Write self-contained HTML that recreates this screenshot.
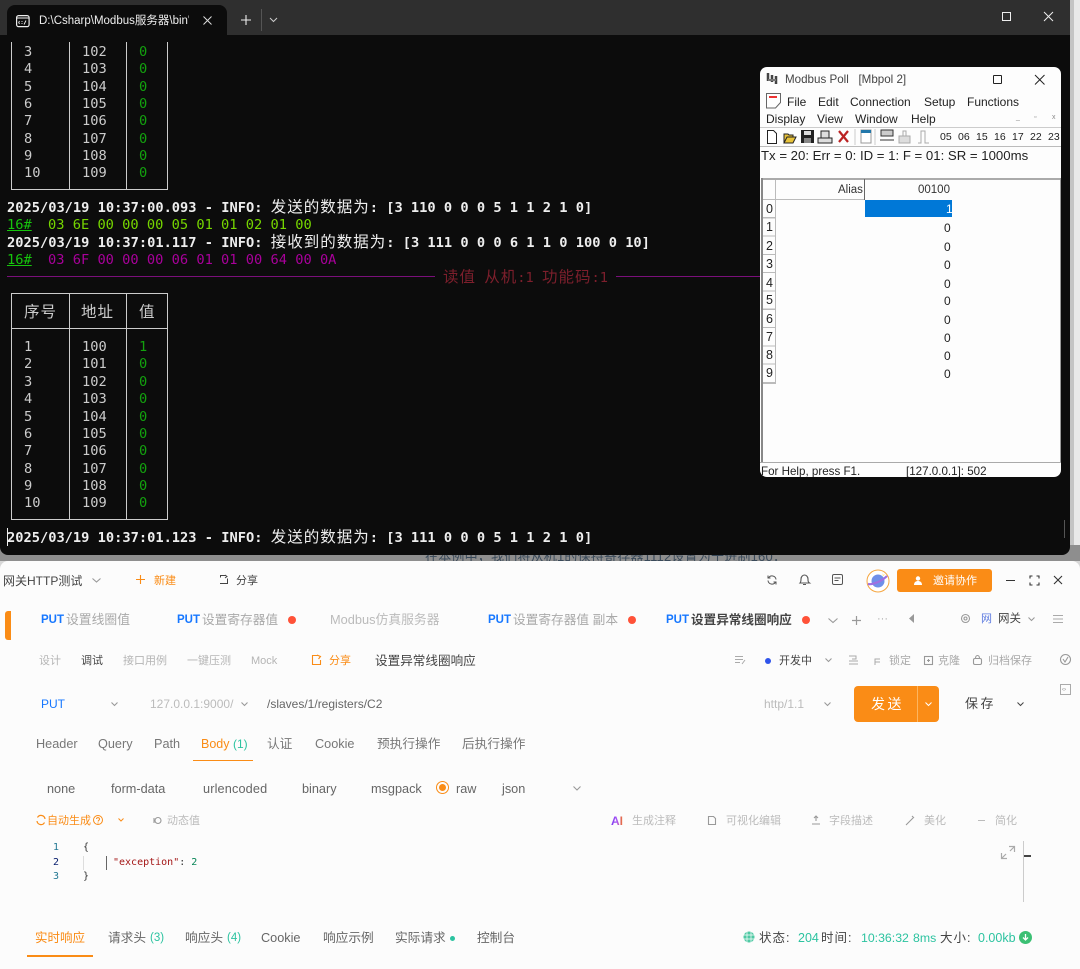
<!DOCTYPE html>
<html lang="zh"><head><meta charset="utf-8"><title>Modbus</title>
<style>
html,body{margin:0;padding:0;width:1080px;height:969px;overflow:hidden;background:#d8d8d8}
*{box-sizing:border-box}
.t{position:absolute;white-space:nowrap;line-height:18px;height:18px;font-family:"Liberation Sans","Noto Sans CJK SC",sans-serif}
.b{position:absolute}
svg{position:absolute;overflow:visible}
#term{position:absolute;left:0;top:0;width:1070px;height:555px;background:#0c0c0c;border-radius:0 0 8px 8px;overflow:hidden}
#term .t{font-family:"DejaVu Sans Mono","Noto Sans CJK SC",monospace;font-size:13.7px;color:#ccc}
#term .l{color:#eee;font-weight:bold}
#term .c{font-family:"Noto Sans CJK SC",sans-serif;font-size:15.5px;letter-spacing:1px;font-weight:400;line-height:1}
#term .g{color:#13a10e}
#term .h{text-decoration:underline;color:#16c60c}
#mb{position:absolute;left:760px;top:67px;width:301px;height:410px;background:#fdfdfd;border-radius:7px;overflow:hidden}
#mb .t{font-size:12px;color:#222;margin-top:1px}
#app{position:absolute;left:0;top:561px;width:1080px;height:408px;background:#fcfcfc;border-radius:8px 8px 0 0}
#app .t{margin-top:1px}
.app{font-size:12.700px;color:#a9a9a9}
.dk{color:#444}.or{color:#fa8c16}.bl{color:#1677ff;font-weight:bold;font-size:11.500px}.te{color:#2cc3a0}
.dot{position:absolute;width:8px;height:8px;border-radius:50%;background:#ff5238}
.ic{fill:none;stroke:#999;stroke-width:1.100}
</style></head><body>
<div class="b" style="left:1070px;top:0;width:4px;height:561px;background:#c4c4c4"></div>
<div class="b" style="left:1074px;top:0;width:6px;height:561px;background:#e9e9e9"></div>
<div class="b" style="left:0;top:545px;width:1080px;height:16px;background:#8e8e8e;overflow:hidden">
 <span class="t" style="left:425px;top:3px;font-size:13px;letter-spacing:.2px;color:#3a4a5a">在本例中，我们将从机1的保持寄存器1112设置为十进制160：</span>
</div>
<div id="term">
 <div class="b" style="left:0;top:0;width:1070px;height:35px;background:#2f2f2f"></div>
 <div class="b" style="left:7px;top:5px;width:220px;height:31px;background:#0c0c0c;border-radius:8px 8px 0 0"></div>
 <svg style="left:16px;top:15px" width="14" height="12"><rect x=".6" y=".6" width="12.500" height="11" rx="2" fill="none" stroke="#eee" stroke-width="1.200"/><path d="M1 3h12" stroke="#eee"/><path d="M3.500 6l-.8 1.500.8 1.500M6 6v1M6 8v1M10 5.500l-2 4" stroke="#eee" stroke-width=".9" fill="none"/></svg>
 <span class="t" style="left:39px;top:12px;font-family:'Liberation Sans','Noto Sans CJK SC',sans-serif;font-size:11.500px;color:#eee;width:150px;overflow:hidden">D:\Csharp\Modbus服务器\bin'</span>
 <svg style="left:203px;top:16px" width="9" height="9"><path d="M.5.500l8 8M8.500.500l-8 8" stroke="#ddd"/></svg>
 <svg style="left:241px;top:15px" width="10" height="10"><path d="M5 0v10M0 5h10" stroke="#eee" stroke-width="1.100"/></svg>
 <div class="b" style="left:261px;top:9px;width:1px;height:22px;background:#555"></div>
 <svg style="left:269px;top:17px" width="9" height="6"><path d="M1 1l3.500 3.500L8 1" stroke="#ccc" fill="none"/></svg>
 <div class="b" style="left:1002px;top:12px;width:9px;height:9px;border:1px solid #eee"></div>
 <svg style="left:1044px;top:12px" width="9" height="9"><path d="M0 0l9 9M9 0l-9 9" stroke="#eee"/></svg>
 <div class="b" style="left:11px;top:42px;width:1px;height:148px;background:#ccc"></div>
 <div class="b" style="left:69px;top:42px;width:1px;height:148px;background:#ccc"></div>
 <div class="b" style="left:126px;top:42px;width:1px;height:148px;background:#ccc"></div>
 <div class="b" style="left:167px;top:42px;width:1px;height:148px;background:#ccc"></div>
 <div class="b" style="left:11px;top:189px;width:157px;height:1px;background:#ccc"></div>
 <div class="b" style="left:0;top:1px;width:200px;height:180px">
 <span class="t" style="left:24px;top:42px">3</span><span class="t" style="left:82px;top:42px">102</span><span class="t g" style="left:139px;top:42px">0</span>
 <span class="t" style="left:24px;top:59px">4</span><span class="t" style="left:82px;top:59px">103</span><span class="t g" style="left:139px;top:59px">0</span>
 <span class="t" style="left:24px;top:77px">5</span><span class="t" style="left:82px;top:77px">104</span><span class="t g" style="left:139px;top:77px">0</span>
 <span class="t" style="left:24px;top:94px">6</span><span class="t" style="left:82px;top:94px">105</span><span class="t g" style="left:139px;top:94px">0</span>
 <span class="t" style="left:24px;top:111px">7</span><span class="t" style="left:82px;top:111px">106</span><span class="t g" style="left:139px;top:111px">0</span>
 <span class="t" style="left:24px;top:129px">8</span><span class="t" style="left:82px;top:129px">107</span><span class="t g" style="left:139px;top:129px">0</span>
 <span class="t" style="left:24px;top:146px">9</span><span class="t" style="left:82px;top:146px">108</span><span class="t g" style="left:139px;top:146px">0</span>
 <span class="t" style="left:24px;top:163px">10</span><span class="t" style="left:82px;top:163px">109</span><span class="t g" style="left:139px;top:163px">0</span>
 </div>
 <span class="t l" style="left:7px;top:199px">2025/03/19 10:37:00.093 - INFO: <span class="c">发送的数据为</span>: [3 110 0 0 0 5 1 1 2 1 0]</span>
 <span class="t h" style="left:7px;top:216px">16#</span>
 <span class="t" style="left:48px;top:216px;color:#76d600">03 6E 00 00 00 05 01 01 02 01 00</span>
 <span class="t l" style="left:7px;top:234px">2025/03/19 10:37:01.117 - INFO: <span class="c">接收到的数据为</span>: [3 111 0 0 0 6 1 1 0 100 0 10]</span>
 <span class="t h" style="left:7px;top:251px">16#</span>
 <span class="t" style="left:48px;top:251px;color:#a8009a">03 6F 00 00 00 06 01 01 00 64 00 0A</span>
 <div class="b" style="left:7px;top:276px;width:428px;height:1px;background:#7a0f7a"></div>
 <div class="b" style="left:616px;top:276px;width:144px;height:1px;background:#7a0f7a"></div>
 <span class="t" style="left:443px;top:269px;color:#7d1f2c"><span class="c">读值</span> <span class="c">从机</span>:1 <span class="c">功能码</span>:1</span>
 <div class="b" style="left:11px;top:293px;width:157px;height:227px;border:1px solid #ccc"></div>
 <div class="b" style="left:69px;top:293px;width:1px;height:227px;background:#ccc"></div>
 <div class="b" style="left:126px;top:293px;width:1px;height:227px;background:#ccc"></div>
 <div class="b" style="left:11px;top:328px;width:157px;height:1px;background:#ccc"></div>
 <span class="t c" style="left:24px;top:302px;line-height:18px">序号</span><span class="t c" style="left:81px;top:302px;line-height:18px">地址</span><span class="t c" style="left:139px;top:302px;line-height:18px">值</span>
 <div class="b" style="left:0;top:1px;width:200px;height:520px">
 <span class="t" style="left:24px;top:337px">1</span><span class="t" style="left:82px;top:337px">100</span><span class="t g" style="left:139px;top:337px">1</span>
 <span class="t" style="left:24px;top:354px">2</span><span class="t" style="left:82px;top:354px">101</span><span class="t g" style="left:139px;top:354px">0</span>
 <span class="t" style="left:24px;top:372px">3</span><span class="t" style="left:82px;top:372px">102</span><span class="t g" style="left:139px;top:372px">0</span>
 <span class="t" style="left:24px;top:389px">4</span><span class="t" style="left:82px;top:389px">103</span><span class="t g" style="left:139px;top:389px">0</span>
 <span class="t" style="left:24px;top:407px">5</span><span class="t" style="left:82px;top:407px">104</span><span class="t g" style="left:139px;top:407px">0</span>
 <span class="t" style="left:24px;top:424px">6</span><span class="t" style="left:82px;top:424px">105</span><span class="t g" style="left:139px;top:424px">0</span>
 <span class="t" style="left:24px;top:441px">7</span><span class="t" style="left:82px;top:441px">106</span><span class="t g" style="left:139px;top:441px">0</span>
 <span class="t" style="left:24px;top:459px">8</span><span class="t" style="left:82px;top:459px">107</span><span class="t g" style="left:139px;top:459px">0</span>
 <span class="t" style="left:24px;top:476px">9</span><span class="t" style="left:82px;top:476px">108</span><span class="t g" style="left:139px;top:476px">0</span>
 <span class="t" style="left:24px;top:493px">10</span><span class="t" style="left:82px;top:493px">109</span><span class="t g" style="left:139px;top:493px">0</span>
 </div>
 <span class="t l" style="left:7px;top:529px">2025/03/19 10:37:01.123 - INFO: <span class="c">发送的数据为</span>: [3 111 0 0 0 5 1 1 2 1 0]</span>
 <div class="b" style="left:7px;top:528px;width:1px;height:18px;background:#eee"></div>
 <div class="b" style="left:1064px;top:520px;width:1px;height:18px;background:#555"></div>
</div>

<div id="mb">
 <svg style="left:6px;top:5px" width="15" height="14"><path d="M2 1v8M6 3v7M10 4v8" stroke="#444" stroke-width="2.500"/><path d="M2 8h8" stroke="#777" stroke-width="2"/></svg>
 <span class="t" style="left:25px;top:3px;color:#444;font-size:11.600px">Modbus Poll &nbsp; [Mbpol 2]</span>
 <div class="b" style="left:233px;top:8px;width:9px;height:9px;border:1px solid #222;border-radius:1px"></div>
 <svg style="left:275px;top:8px" width="10" height="10"><path d="M0 0l9.500 9.500M9.500 0L0 9.500" stroke="#222" stroke-width="1"/></svg>
 <svg style="left:6px;top:26px" width="15" height="16"><path d="M.5.500h14v9l-5 5.500H.5z" fill="#fff" stroke="#666"/><path d="M3 4h8" stroke="#e33" stroke-width="2"/></svg>
 <span class="t" style="left:27px;top:25px">File</span><span class="t" style="left:58px;top:25px">Edit</span><span class="t" style="left:90px;top:25px">Connection</span><span class="t" style="left:164px;top:25px">Setup</span><span class="t" style="left:207px;top:25px">Functions</span>
 <span class="t" style="left:6px;top:42px">Display</span><span class="t" style="left:57px;top:42px">View</span><span class="t" style="left:95px;top:42px">Window</span><span class="t" style="left:151px;top:42px">Help</span>
 <span class="t" style="left:256px;top:41px;font-size:7px;color:#888">_</span><span class="t" style="left:274px;top:41px;font-size:7px;color:#888">▫</span><span class="t" style="left:292px;top:41px;font-size:7px;color:#888">x</span>
 <div class="b" style="left:0;top:60px;width:301px;height:1px;background:#ccc"></div>
 <div class="b" style="left:0;top:79px;width:301px;height:1px;background:#bbb"></div>
 <svg style="left:6px;top:62px" width="160" height="17">
  <path d="M1.500 1.500h6l3 3v10h-9z" fill="#fff" stroke="#222"/>
  <path d="M18 14V5h4l1 1h4v2M18 14l3-6h9l-3 6z" fill="#e8c33a" stroke="#222"/>
  <rect x="35" y="1" width="13" height="13" fill="#222"/><rect x="38" y="2" width="7" height="4" fill="#ddd"/><rect x="38" y="9" width="7" height="5" fill="#888"/>
  <path d="M52 9h14v5H52zM55 9V2h8v7" fill="#ddd" stroke="#222"/>
  <path d="M73 2l9 11M82 2l-9 11" stroke="#b22" stroke-width="2.200"/>
  <path d="M89 0v16" stroke="#ccc"/>
  <rect x="95" y="1" width="10" height="13" fill="#fff" stroke="#999"/><rect x="95" y="1" width="10" height="3" fill="#27a"/>
  <path d="M109 0v16" stroke="#ccc"/>
  <path d="M115 1h12v6h-12zM114 11h14" fill="#ccc" stroke="#333"/>
  <path d="M133 7h11v7h-11z" fill="#ddd" stroke="#aaa"/><path d="M137 7V2h3v5" fill="none" stroke="#aaa"/>
  <path d="M152 14h3V2h4v12h4" fill="none" stroke="#aaa"/>
 </svg>
 <span class="t" style="left:180px;top:60px;font-size:10.500px">05</span><span class="t" style="left:198px;top:60px;font-size:10.500px">06</span><span class="t" style="left:216px;top:60px;font-size:10.500px">15</span><span class="t" style="left:234px;top:60px;font-size:10.500px">16</span><span class="t" style="left:252px;top:60px;font-size:10.500px">17</span><span class="t" style="left:270px;top:60px;font-size:10.500px">22</span><span class="t" style="left:288px;top:60px;font-size:10.500px">23</span>
 <span class="t" style="left:1px;top:79px;font-size:13.200px">Tx = 20: Err = 0: ID = 1: F = 01: SR = 1000ms</span>
 <div class="b" style="left:1px;top:111px;width:300px;height:2px;background:#aaa"></div>
 <div class="b" style="left:1px;top:111px;width:2px;height:285px;background:#888"></div>
 <div class="b" style="left:300px;top:111px;width:1px;height:285px;background:#999"></div>
 <div class="b" style="left:15px;top:113px;width:1px;height:20px;background:#bbb"></div>
 <div class="b" style="left:104px;top:112px;width:1px;height:21px;background:#666"></div>
 <div class="b" style="left:3px;top:132px;width:101px;height:1px;background:#bbb"></div>
 <span class="t" style="left:78px;top:113px;font-size:11.500px;color:#333">Alias</span>
 <span class="t" style="left:158px;top:113px;font-size:11.500px;color:#333">00100</span>
 <div class="b" style="left:105px;top:133px;width:87px;height:17px;background:#0078d7"></div>
 <span class="t" style="left:186px;top:132px;color:#fff">1</span>
 <div class="b" style="left:3px;top:133px;width:13px;height:184px;border-right:1px solid #bbb;border-bottom:1px solid #bbb;background:repeating-linear-gradient(#fdfdfd 0,#fdfdfd 17.200px,#bbb 17.200px,#bbb 18.300px)"></div>
 <span class="t" style="left:6px;top:132px;font-size:12.500px">0</span><span class="t" style="left:6px;top:150px;font-size:12.500px">1</span><span class="t" style="left:6px;top:169px;font-size:12.500px">2</span><span class="t" style="left:6px;top:187px;font-size:12.500px">3</span><span class="t" style="left:6px;top:206px;font-size:12.500px">4</span><span class="t" style="left:6px;top:223px;font-size:12.500px">5</span><span class="t" style="left:6px;top:242px;font-size:12.500px">6</span><span class="t" style="left:6px;top:260px;font-size:12.500px">7</span><span class="t" style="left:6px;top:278px;font-size:12.500px">8</span><span class="t" style="left:6px;top:296px;font-size:12.500px">9</span>
 <span class="t" style="left:184px;top:151px">0</span><span class="t" style="left:184px;top:170px">0</span><span class="t" style="left:184px;top:188px">0</span><span class="t" style="left:184px;top:207px">0</span><span class="t" style="left:184px;top:224px">0</span><span class="t" style="left:184px;top:243px">0</span><span class="t" style="left:184px;top:261px">0</span><span class="t" style="left:184px;top:279px">0</span><span class="t" style="left:184px;top:297px">0</span>
 <div class="b" style="left:0;top:395px;width:301px;height:1px;background:#aaa"></div>
 <span class="t" style="left:1px;top:395px;font-size:11.600px">For Help, press F1.</span>
 <span class="t" style="left:146px;top:395px;font-size:11.600px">[127.0.0.1]: 502</span>
</div>

<div id="app">
 <span class="t dk" style="left:3px;top:10px;font-size:12px">网关HTTP测试</span>
 <svg style="left:92px;top:17px" width="9" height="5"><path d="M.5.500l4 3.500 4-3.500" class="ic"/></svg>
 <svg style="left:136px;top:14px" width="9" height="9"><path d="M4.500 0v9M0 4.500h9" stroke="#fa8c16" stroke-width="1.100"/></svg>
 <span class="t or" style="left:154px;top:10px;font-size:11px">新建</span>
 <svg style="left:219px;top:14px" width="10" height="9"><path d="M7 .5H1.500v2M1 8.500h7.500v-5M6 0l2 1.500L6 3" fill="none" stroke="#444"/></svg>
 <span class="t dk" style="left:236px;top:10px;font-size:11px">分享</span>
 <svg style="left:767px;top:14px" width="10" height="10"><path d="M9 4.500A4 4 0 0 0 1.500 3M1 5.500A4 4 0 0 0 8.500 7M1 .5V3h2.500M9 9.500V7H6.500" fill="none" stroke="#555"/></svg>
 <svg style="left:799px;top:13px" width="11" height="12"><path d="M1 9c1-1 1-2 1-4s1.500-4 3.500-4S9 3 9 5s0 3 1.500 4zM4 10.500h3" fill="none" stroke="#555" stroke-width="1.100"/></svg>
 <svg style="left:832px;top:13px" width="11" height="11"><rect x=".5" y=".5" width="10" height="10" rx="1.500" fill="none" stroke="#555"/><path d="M2.500 4h6M2.500 6.500h4" stroke="#555"/></svg>
 <svg style="left:866px;top:8px" width="24" height="24"><circle cx="12" cy="12" r="11" fill="#fff" stroke="#f5a640"/><circle cx="12" cy="12" r="6.500" fill="#6f8fe8"/><path d="M2 15c5 1 14-3 19-8" stroke="#a06fe0" stroke-width="2.200" fill="none"/><path d="M16 3l1 3 2-1-2 2z" fill="#ffd23f"/></svg>
 <div class="b" style="left:897px;top:8px;width:95px;height:23px;background:#fa8c16;border-radius:3px"></div>
 <svg style="left:914px;top:15px" width="10" height="10"><circle cx="4" cy="2.500" r="2.200" fill="#fff"/><path d="M0 9c0-3 2-4 4-4s4 1 4 4z" fill="#fff"/></svg>
 <span class="t" style="left:933px;top:10px;font-size:11px;color:#fff">邀请协作</span>
 <div class="b" style="left:1006px;top:19px;width:9px;height:1px;background:#333"></div>
 <svg style="left:1030px;top:15px" width="9" height="9"><path d="M0 2.500V0h2.500M6.500 0H9v2.500M9 6.500V9H6.500M2.500 9H0V6.500" fill="none" stroke="#333" stroke-width="1.100"/></svg>
 <svg style="left:1054px;top:15px" width="8" height="8"><path d="M0 0l8 8M8 0L0 8" stroke="#333" stroke-width="1.100"/></svg>

 <div class="b" style="left:5px;top:50px;width:6px;height:29px;background:#fa8c16;border-radius:3px 0 0 3px"></div>
 <span class="t bl" style="left:41px;top:49px">PUT</span><span class="t app" style="left:66px;top:49px;font-size:12.800px">设置线圈值</span>
 <span class="t bl" style="left:177px;top:49px">PUT</span><span class="t app" style="left:202px;top:49px">设置寄存器值</span><span class="dot" style="left:288px;top:55px"></span>
 <span class="t app" style="left:330px;top:49px;color:#bbb;font-size:12.800px">Modbus仿真服务器</span>
 <span class="t bl" style="left:488px;top:49px">PUT</span><span class="t app" style="left:513px;top:49px">设置寄存器值 副本</span><span class="dot" style="left:628px;top:55px"></span>
 <span class="t bl" style="left:666px;top:49px">PUT</span><span class="t dk" style="left:691px;top:49px;font-size:12.600px;font-weight:bold">设置异常线圈响应</span><span class="dot" style="left:802px;top:55px"></span>
 <svg style="left:828px;top:57px" width="10" height="6"><path d="M.5.500l4.500 4 4.500-4" class="ic"/></svg>
 <svg style="left:852px;top:55px" width="9" height="9"><path d="M4.500 0v9M0 4.500h9" stroke="#999" stroke-width="1.200"/></svg>
 <span class="t app" style="left:877px;top:48px;font-size:11px">···</span>
 <svg style="left:909px;top:53px" width="6" height="9"><path d="M5 0v9L0 4.500z" fill="#999"/></svg>
 <svg style="left:961px;top:53px" width="9" height="9"><circle cx="4.500" cy="4.500" r="4" class="ic"/><circle cx="4.500" cy="4.500" r="1.500" class="ic"/></svg>
 <span class="t" style="left:981px;top:48px;font-size:11px;color:#5e7ce0">网</span>
 <span class="t dk" style="left:998px;top:48px;font-size:11.500px">网关</span>
 <svg style="left:1028px;top:56px" width="7" height="5"><path d="M.5.500l3 3 3-3" class="ic"/></svg>
 <svg style="left:1053px;top:54px" width="10" height="8"><path d="M0 .5h10M0 4h10M0 7.500h10" stroke="#aaa"/></svg>

 <span class="t app" style="left:39px;top:90px;font-size:11px;color:#b5b5b5">设计</span>
 <span class="t dk" style="left:81px;top:90px;font-size:11px">调试</span>
 <span class="t app" style="left:123px;top:90px;font-size:11px;color:#b5b5b5">接口用例</span>
 <span class="t app" style="left:187px;top:90px;font-size:11px;color:#b5b5b5">一键压测</span>
 <span class="t app" style="left:251px;top:90px;font-size:11px;color:#b5b5b5">Mock</span>
 <svg style="left:312px;top:94px" width="10" height="10"><path d="M6 .5H.5v9h8V5M5 0l3.500 1.500L6.500 4" fill="none" stroke="#fa8c16" stroke-width="1.100"/></svg>
 <span class="t or" style="left:329px;top:90px;font-size:11px">分享</span>
 <span class="t dk" style="left:375px;top:90px;font-size:12.600px">设置异常线圈响应</span>
 <svg style="left:735px;top:95px" width="10" height="9"><path d="M0 .5h8M0 3.500h8M0 6.500h5M7 8l3-4" stroke="#aaa" fill="none"/></svg>
 <span class="b" style="left:765px;top:97px;width:6px;height:6px;border-radius:50%;background:#2f54eb"></span>
 <span class="t dk" style="left:779px;top:90px;font-size:11px">开发中</span>
 <svg style="left:825px;top:97px" width="7" height="5"><path d="M.5.500l3 3 3-3" class="ic"/></svg>
 <svg style="left:849px;top:94px" width="10" height="10"><path d="M0 1h7v3H3M0 6h9M0 9h9" stroke="#aaa" fill="none"/></svg>
 <svg style="left:874px;top:95px" width="8" height="10"><path d="M1 9V3h5M1 6h5" stroke="#aaa" fill="none"/></svg>
 <span class="t app" style="left:889px;top:90px;font-size:11px">锁定</span>
 <svg style="left:924px;top:95px" width="9" height="9"><rect x=".5" y=".5" width="8" height="8" class="ic"/><path d="M3 4.500h3M4.500 3v3" class="ic"/></svg>
 <span class="t app" style="left:938px;top:90px;font-size:11px">克隆</span>
 <svg style="left:973px;top:94px" width="9" height="10"><rect x=".5" y="3.500" width="8" height="6" rx="1.500" class="ic"/><path d="M2.500 3.500c0-4 4-4 4 0" class="ic"/></svg>
 <span class="t app" style="left:988px;top:90px;font-size:11px">归档保存</span>
 <svg style="left:1060px;top:93px" width="11" height="11"><circle cx="5.500" cy="5.500" r="5" class="ic"/><path d="M3 5l2 3 3-5" class="ic"/></svg>

 <span class="t" style="left:41px;top:133px;font-size:12px;color:#1677ff">PUT</span>
 <svg style="left:111px;top:141px" width="7" height="5"><path d="M.5.500l3 3 3-3" class="ic"/></svg>
 <span class="t app" style="left:150px;top:133px;font-size:12px;color:#bbb">127.0.0.1:9000/</span>
 <svg style="left:241px;top:141px" width="7" height="5"><path d="M.5.500l3 3 3-3" class="ic"/></svg>
 <span class="t" style="left:267px;top:133px;font-size:12px;color:#666">/slaves/1/registers/C2</span>
 <span class="t app" style="left:764px;top:133px;font-size:12px;color:#bbb">http/1.1</span>
 <svg style="left:824px;top:141px" width="7" height="5"><path d="M.5.500l3 3 3-3" class="ic"/></svg>
 <div class="b" style="left:854px;top:125px;width:85px;height:36px;background:#fa8c16;border-radius:4px"></div>
 <div class="b" style="left:917px;top:125px;width:1px;height:36px;background:#fdb55f"></div>
 <span class="t" style="left:871px;top:133px;font-size:14px;letter-spacing:2.500px;color:#fff">发送</span>
 <svg style="left:925px;top:141px" width="7" height="5"><path d="M.5.500l3 3 3-3" stroke="#fff" fill="none"/></svg>
 <span class="t dk" style="left:965px;top:133px;font-size:13px;letter-spacing:2.500px">保存</span>
 <svg style="left:1017px;top:141px" width="7" height="5"><path d="M.5.500l3 3 3-3" stroke="#444" fill="none"/></svg>
 <div class="b" style="left:1060px;top:123px;width:11px;height:11px;border:1px solid #aaa"></div>
 <span class="t" style="left:1062px;top:119px;font-size:6px;color:#888">‹›</span>

 <span class="t app" style="left:36px;top:173px;color:#777">Header</span>
 <span class="t app" style="left:98px;top:173px;color:#777">Query</span>
 <span class="t app" style="left:154px;top:173px;color:#777">Path</span>
 <span class="t or" style="left:201px;top:173px;font-size:12.500px">Body</span><span class="t te" style="left:233px;top:173px;font-size:12px">(1)</span>
 <span class="t app" style="left:267px;top:173px;color:#777">认证</span>
 <span class="t app" style="left:315px;top:173px;color:#777">Cookie</span>
 <span class="t app" style="left:377px;top:173px;color:#777">预执行操作</span>
 <span class="t app" style="left:462px;top:173px;color:#777">后执行操作</span>
 <div class="b" style="left:193px;top:199px;width:60px;height:1px;background:#fa8c16"></div>

 <span class="t app" style="left:47px;top:218px;color:#666">none</span>
 <span class="t app" style="left:111px;top:218px;color:#666">form-data</span>
 <span class="t app" style="left:203px;top:218px;color:#666;letter-spacing:.15px">urlencoded</span>
 <span class="t app" style="left:302px;top:218px;color:#666">binary</span>
 <span class="t app" style="left:371px;top:218px;color:#666">msgpack</span>
 <div class="b" style="left:436px;top:220px;width:13px;height:13px;border-radius:50%;border:1.500px solid #fa8c16"></div>
 <div class="b" style="left:439px;top:223px;width:7px;height:7px;border-radius:50%;background:#fa8c16"></div>
 <span class="t app" style="left:456px;top:218px;color:#666">raw</span>
 <span class="t app" style="left:502px;top:218px;color:#666">json</span>
 <svg style="left:573px;top:225px" width="8" height="5"><path d="M.5.500l3.500 3.500L7.500.5" class="ic"/></svg>

 <svg style="left:36px;top:254px" width="10" height="10"><path d="M9 4A4 4 0 0 0 1.500 2.500M1 6a4 4 0 0 0 7.500 1.500" fill="none" stroke="#fa8c16" stroke-width="1.200"/></svg>
 <span class="t or" style="left:47px;top:250px;font-size:11px">自动生成</span>
 <svg style="left:93px;top:254px" width="10" height="10"><circle cx="5" cy="5" r="4.500" fill="none" stroke="#fa8c16"/><path d="M3.500 4a1.500 1.500 0 1 1 2 1.500L5 6.500M5 7.500v1" fill="none" stroke="#fa8c16"/></svg>
 <svg style="left:118px;top:257px" width="6" height="4"><path d="M.5.500l2.500 2.500L5.500.5" stroke="#fa8c16" fill="none"/></svg>
 <svg style="left:153px;top:255px" width="9" height="9"><circle cx="5" cy="4.500" r="3" class="ic"/><path d="M1 2v5" class="ic"/></svg>
 <span class="t app" style="left:167px;top:250px;font-size:11px;color:#bbb">动态值</span>
 <span class="t" style="left:611px;top:250px;font-size:12px;font-weight:bold;background:linear-gradient(90deg,#7c3aed,#a855f7,#f97316);-webkit-background-clip:text;background-clip:text;color:transparent">AI</span>
 <span class="t app" style="left:632px;top:250px;font-size:11px;color:#bbb">生成注释</span>
 <svg style="left:708px;top:255px" width="8" height="9"><path d="M.5.500h5l2 2v6h-7z" class="ic"/></svg>
 <span class="t app" style="left:726px;top:250px;font-size:11px;color:#bbb">可视化编辑</span>
 <svg style="left:812px;top:255px" width="8" height="9"><path d="M4 0v5M2 2l2-2 2 2M0 8h8" class="ic"/></svg>
 <span class="t app" style="left:829px;top:250px;font-size:11px;color:#bbb">字段描述</span>
 <svg style="left:906px;top:255px" width="8" height="9"><path d="M0 9l7-7M6 0l2 2" class="ic"/></svg>
 <span class="t app" style="left:924px;top:250px;font-size:11px;color:#bbb">美化</span>
 <div class="b" style="left:978px;top:259px;width:7px;height:1px;background:#bbb"></div>
 <span class="t app" style="left:995px;top:250px;font-size:11px;color:#bbb">简化</span>

 <span class="t" style="left:53px;top:277px;font:10px/18px 'DejaVu Sans Mono',monospace;color:#237893">1</span>
 <span class="t" style="left:53px;top:292px;font:10px/18px 'DejaVu Sans Mono',monospace;color:#0b216f">2</span>
 <span class="t" style="left:53px;top:306px;font:10px/18px 'DejaVu Sans Mono',monospace;color:#237893">3</span>
 <span class="t" style="left:83px;top:277px;font:10px/18px 'DejaVu Sans Mono',monospace;color:#333">{</span>
 <div class="b" style="left:83px;top:295px;width:1px;height:14px;background:#ddd"></div>
 <div class="b" style="left:106px;top:295px;width:1px;height:14px;background:#666"></div>
 <span class="t" style="left:113px;top:292px;font:10px/18px 'DejaVu Sans Mono',monospace;color:#a31515">"exception"<span style="color:#333">:</span> <span style="color:#098658">2</span></span>
 <span class="t" style="left:83px;top:306px;font:10px/18px 'DejaVu Sans Mono',monospace;color:#333">}</span>
 <svg style="left:1001px;top:285px" width="14" height="13"><path d="M.5 7v5.500H6M.5 12.500L5 8M13.500 6V.5H8M13.500.5L9 5" fill="none" stroke="#aaa" stroke-width="1.200"/></svg>
 <div class="b" style="left:1023px;top:280px;width:1px;height:61px;background:#ccc"></div>
 <div class="b" style="left:1024px;top:294px;width:7px;height:2px;background:#444"></div>

 <span class="t or" style="left:35px;top:367px;font-size:12.500px">实时响应</span>
 <div class="b" style="left:27px;top:394px;width:66px;height:2px;background:#fa8c16"></div>
 <span class="t app" style="left:108px;top:367px;color:#666">请求头</span><span class="t te" style="left:150px;top:367px;font-size:11.500px">(3)</span>
 <span class="t app" style="left:185px;top:367px;color:#666">响应头</span><span class="t te" style="left:227px;top:367px;font-size:11.500px">(4)</span>
 <span class="t app" style="left:261px;top:367px;color:#666">Cookie</span>
 <span class="t app" style="left:323px;top:367px;color:#666">响应示例</span>
 <span class="t app" style="left:395px;top:367px;color:#666">实际请求</span>
 <span class="b" style="left:450px;top:375px;width:5px;height:5px;border-radius:50%;background:#2cc3a0"></span>
 <span class="t app" style="left:477px;top:367px;color:#666">控制台</span>
 <svg style="left:743px;top:370px" width="12" height="12"><circle cx="6" cy="6" r="5.500" fill="#4fc9a4"/><path d="M0 4h12M0 8h12M4 0v12M8 0v12" stroke="#fff" stroke-width=".7"/></svg>
 <span class="t dk" style="left:759px;top:367px;font-size:12.500px;letter-spacing:1px">状态:</span>
 <span class="t te" style="left:798px;top:367px;font-size:12.500px">204</span>
 <span class="t dk" style="left:821px;top:367px;font-size:12.500px;letter-spacing:1px">时间:</span>
 <span class="t te" style="left:861px;top:367px;font-size:12.300px">10:36:32</span>
 <span class="t te" style="left:913px;top:367px;font-size:12.300px">8ms</span>
 <span class="t dk" style="left:940px;top:367px;font-size:12.500px;letter-spacing:1px">大小:</span>
 <span class="t te" style="left:978px;top:367px;font-size:12.500px">0.00kb</span>
 <svg style="left:1019px;top:370px" width="13" height="13"><circle cx="6.500" cy="6.500" r="6.500" fill="#3cc074"/><path d="M6.500 3v6M4 6.500l2.500 2.500L9 6.500" stroke="#fff" stroke-width="1.300" fill="none"/></svg>
</div>
</body></html>
